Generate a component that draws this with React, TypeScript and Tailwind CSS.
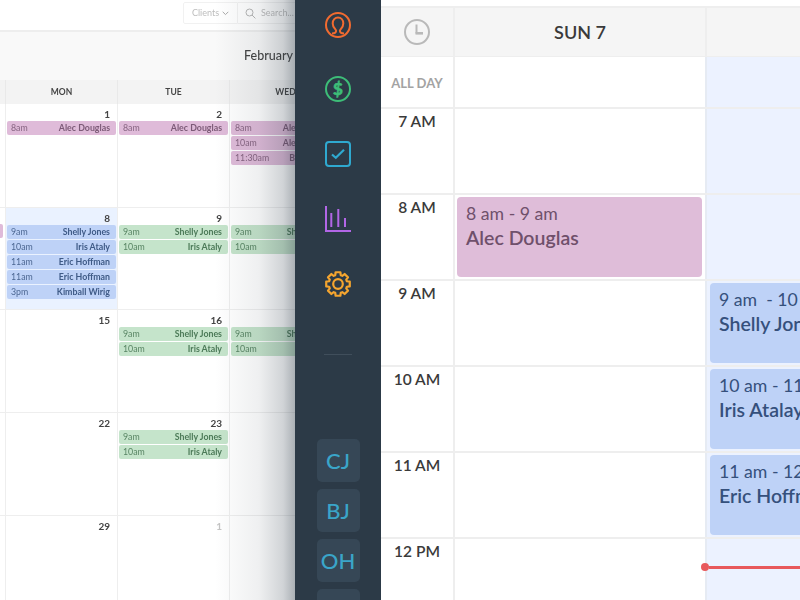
import React from "react";

type Ev = { t: string; n: string };
const pink = "bg-[#dfbbd9] text-[#7c5a77]";
const blue = "bg-[#bed2f7] text-[#3e5a86]";
const green = "bg-[#c5e4cb] text-[#4c7a58]";

function MonthEvent({ e, c }: { e: Ev; c: string }) {
  return (
    <div className={`h-[14px] rounded-[2px] flex items-center justify-between pl-1 pr-1.5 text-[8.8px] leading-none ${c}`}>
      <span className="opacity-90">{e.t}</span>
      <span className="font-bold whitespace-nowrap">{e.n}</span>
    </div>
  );
}

function DayCell({ d, evs = [], c = "", today = false, muted = false }: { d?: string; evs?: Ev[]; c?: string; today?: boolean; muted?: boolean }) {
  return (
    <div className={`w-[112px] shrink-0 border-l border-[#eeeeee] px-[1px] ${today ? "bg-[#eaf2ff]" : "bg-white"}`}>
      <div className={`h-[16px] pt-[5px] pr-[6px] text-right text-[10px] leading-[11px] font-bold ${muted ? "text-[#c4c4c4]" : "text-[#444444]"}`}>{d}</div>
      <div className="flex flex-col gap-[1px] mt-[1px]">
        {evs.map((e, i) => (
          <MonthEvent key={i} e={e} c={c} />
        ))}
      </div>
    </div>
  );
}

function MonthRow({ h, children, first }: { h: string; children: React.ReactNode; first?: boolean }) {
  return <div className={`flex pl-[5px] ${h} ${first ? "" : "border-t border-[#eeeeee]"}`}>{children}</div>;
}

const a: Ev = { t: "8am", n: "Alec Douglas" };
const s: Ev = { t: "9am", n: "Shelly Jones" };
const ir: Ev = { t: "10am", n: "Iris Ataly" };
const er: Ev = { t: "11am", n: "Eric Hoffman" };
const k: Ev = { t: "3pm", n: "Kimball Wirig" };

function MonthPanel() {
  return (
    <div className="w-[295px] h-full shrink-0 relative overflow-hidden bg-white">
      <div className="w-[460px] blur-[0.35px]">
        <div className="h-[30px] flex pl-[183px] items-start pt-[2px] text-[9px] text-[#bdbdbd]">
          <div className="h-[22px] w-[55px] border border-[#f1f1f1] rounded-l-[2px] flex items-center justify-center gap-[3px]">
            Clients
            <svg width="7" height="5" viewBox="0 0 7 5" fill="none" stroke="#a9a9a9" strokeWidth="1"><path d="M.7.8 3.5 3.6 6.3.8" /></svg>
          </div>
          <div className="h-[22px] w-[100px] border border-l-0 border-[#f1f1f1] flex items-center pl-[7px] gap-[5px]">
            <svg width="11" height="11" viewBox="0 0 11 11" fill="none" stroke="#b5b5b5" strokeWidth="1"><circle cx="4.5" cy="4.5" r="3.5" /><path d="m7 7 3.4 3.4" /></svg>
            Search...
          </div>
        </div>
        <div className="h-[50px] border-t-2 border-[#eeeeee] bg-[#f9f9f9] flex items-center pl-[244px] text-[12.5px] font-medium text-[#444444]">February 2015</div>
        <div className="h-[24px] flex pl-[5px] bg-[#f3f3f3] text-[8.5px] font-bold text-[#444444]">
          {["MON", "TUE", "WED"].map((d) => (
            <div key={d} className="w-[112px] border-l border-[#e9e9e9] flex items-center justify-center">{d}</div>
          ))}
        </div>
        <MonthRow h="h-[103px]" first>
          <DayCell d="1" evs={[a]} c={pink} />
          <DayCell d="2" evs={[a]} c={pink} />
          <DayCell d="3" evs={[a, { t: "10am", n: "Alec Douglas" }, { t: "11:30am", n: "Brian Jones" }]} c={pink} />
        </MonthRow>
        <MonthRow h="h-[102px]">
          <DayCell d="8" evs={[s, ir, er, er, k]} c={blue} today />
          <DayCell d="9" evs={[s, ir]} c={green} />
          <DayCell d="10" evs={[s, ir]} c={green} />
        </MonthRow>
        <MonthRow h="h-[103px]">
          <DayCell d="15" />
          <DayCell d="16" evs={[s, ir]} c={green} />
          <DayCell d="17" evs={[s, ir]} c={green} />
        </MonthRow>
        <MonthRow h="h-[103px]">
          <DayCell d="22" />
          <DayCell d="23" evs={[s, ir]} c={green} />
          <DayCell d="24" />
        </MonthRow>
        <MonthRow h="h-[90px]">
          <DayCell d="29" />
          <DayCell d="1" muted />
          <DayCell d="2" muted />
        </MonthRow>
      </div>
      <div className="absolute left-0 top-[224px] w-[3px] h-[14px] rounded-r-[2px] bg-[#dfbbd9]" />
      <div className="absolute right-0 top-0 bottom-0 w-[80px] bg-[linear-gradient(to_right,#2c3a4700_0%,#2c3a4714_55%,#2c3a4738_85%,#2c3a4766_100%)]" />
    </div>
  );
}

function gearPath() {
  const c = 13;
  const pts: string[] = [];
  for (let i = 0; i < 8; i++) {
    const base = (i * Math.PI) / 4 - Math.PI / 2;
    const seq: [number, number][] = [
      [-0.3, 9.3],
      [-0.2, 12],
      [0.2, 12],
      [0.3, 9.3],
    ];
    for (const [da, r] of seq) {
      pts.push(`${(c + r * Math.cos(base + da)).toFixed(2)} ${(c + r * Math.sin(base + da)).toFixed(2)}`);
    }
  }
  return `M${pts.join("L")}Z`;
}

function Sidebar() {
  return (
    <div className="w-[86px] h-full shrink-0 bg-[#2c3a47] flex flex-col items-center overflow-hidden">
      <svg className="mt-[12px] shrink-0" width="26" height="26" viewBox="0 0 26 26" fill="none" stroke="#f26b30" strokeWidth="2">
        <circle cx="13" cy="13" r="12" />
        <path d="M7 21.500c3.200-.2 4.100-1.300 4.100-2.800 0-1.500-3.400-3-3.400-7.300C7.700 8 10 5.500 13 5.500s5.300 2.500 5.300 5.900c0 4.300-3.400 5.800-3.400 7.300 0 1.500.9 2.600 4.100 2.800" />
      </svg>
      <svg className="mt-[38px] shrink-0" width="26" height="26" viewBox="0 0 26 26" fill="none">
        <circle cx="13" cy="13" r="12" stroke="#3dbd78" strokeWidth="2" />
        <text x="13" y="19" textAnchor="middle" fontSize="17" fontWeight="900" fontFamily="Lato, sans-serif" fill="#3dbd78" stroke="#3dbd78" strokeWidth="0.5">$</text>
      </svg>
      <svg className="mt-[39px] shrink-0" width="26" height="26" viewBox="0 0 26 26" fill="none">
        <rect x="1" y="1" width="24" height="24" rx="3" stroke="#2fa9d0" strokeWidth="2" />
        <path d="M7 13.500 10.800 16.800 19 8.800" stroke="#2fa9d0" strokeWidth="2.200" />
      </svg>
      <svg className="mt-[39px] shrink-0" width="26" height="26" viewBox="0 0 26 26" fill="none" stroke="#b266e6" strokeWidth="2">
        <path d="M1 0V25H26" />
        <path d="M6.300 7V21M13.300 3V21M20 12V21" />
      </svg>
      <svg className="mt-[39px] shrink-0" width="26" height="26" viewBox="0 0 26 26" fill="none" stroke="#f5a52f" strokeWidth="2.200" strokeLinejoin="round">
        <circle cx="13" cy="13" r="4.800" />
        <path d={gearPath()} />
      </svg>
      <div className="mt-[57px] w-[28px] h-[1px] bg-[#404e5b] shrink-0" />
      <div className="mt-[84px] flex flex-col gap-[7px] shrink-0">
        {["CJ", "BJ", "OH", ""].map((x, i) => (
          <div key={i} className="w-[43px] h-[43px] rounded-[5px] bg-[#364756] flex items-center justify-center text-[22px] font-medium text-[#3aa5c9]">{x}</div>
        ))}
      </div>
    </div>
  );
}

function Hour({ label, sun, col }: { label: string; sun?: React.ReactNode; col?: React.ReactNode }) {
  return (
    <div className="h-[86px] flex border-b-2 border-[#eeeeee] shrink-0">
      <div className="w-[72px] shrink-0 text-center text-[15.5px] leading-[20px] pt-[2px] font-semibold text-[#3a3a3a]">{label}</div>
      <div className="w-[252px] shrink-0 border-l-2 border-[#eeeeee] pl-[2px] pt-[2px]">{sun}</div>
      <div className="flex-1 border-l-2 border-[#e6ebf3] bg-[#ecf2ff] pl-[3px] pt-[2px] relative">{col}</div>
    </div>
  );
}

function DayEvent({ t, n, c, w }: { t: string; n: string; c: string; w: string }) {
  return (
    <div className={`h-[80px] rounded-[4px] pl-[9px] pt-[6px] whitespace-pre overflow-hidden ${c} ${w}`}>
      <div className="text-[17.7px] leading-[22px]">{t}</div>
      <div className="text-[19.5px] leading-[25px] font-semibold">{n}</div>
    </div>
  );
}

function DayPanel() {
  return (
    <div className="flex-1 h-full bg-white overflow-hidden flex flex-col">
      <div className="h-[8px] shrink-0 border-b-2 border-[#eeeeee]" />
      <div className="h-[49px] shrink-0 flex bg-[#f5f5f5] border-b border-[#eeeeee]">
        <div className="w-[72px] shrink-0 flex items-center justify-center">
          <svg width="26" height="26" viewBox="0 0 26 26" fill="none" stroke="#b9b9b9" strokeWidth="2">
            <circle cx="13" cy="13" r="12" />
            <path d="M12.500 5.500V14.500" />
            <path d="M11.500 14.300H19" strokeWidth="2.600" />
          </svg>
        </div>
        <div className="w-[252px] shrink-0 border-l-2 border-[#eeeeee] flex items-center justify-center text-[18px] font-semibold text-[#3a3a3a]">SUN 7</div>
        <div className="flex-1 border-l-2 border-[#eeeeee]" />
      </div>
      <div className="h-[52px] shrink-0 flex border-b-2 border-[#eeeeee]">
        <div className="w-[72px] shrink-0 flex items-center justify-center pt-[4px] text-[13px] font-bold text-[#a3a3a3]">ALL DAY</div>
        <div className="w-[252px] shrink-0 border-l-2 border-[#eeeeee]" />
        <div className="flex-1 border-l-2 border-[#e6ebf3] bg-[#ecf2ff]" />
      </div>
      <Hour label="7 AM" />
      <Hour label="8 AM" sun={<DayEvent t="8 am - 9 am" n="Alec Douglas" c="bg-[#dfbdd9] text-[#6f506b]" w="w-[245px]" />} />
      <Hour label="9 AM" col={<DayEvent t="9 am  - 10 am" n="Shelly Jones" c="bg-[#bed2f7] text-[#35507c]" w="w-[200px]" />} />
      <Hour label="10 AM" col={<DayEvent t="10 am - 11 am" n="Iris Atalay" c="bg-[#bed2f7] text-[#35507c]" w="w-[200px]" />} />
      <Hour label="11 AM" col={<DayEvent t="11 am - 12 pm" n="Eric Hoffman" c="bg-[#bed2f7] text-[#35507c]" w="w-[200px]" />} />
      <Hour
        label="12 PM"
        col={
          <div className="absolute left-[-6px] right-0 top-[24px] flex items-center">
            <div className="w-[8px] h-[8px] rounded-full bg-[#e8595c] shrink-0" />
            <div className="flex-1 h-[3px] bg-[#e8595c]" />
          </div>
        }
      />
    </div>
  );
}

export default function App() {
  return (
    <div className="w-[800px] h-[600px] flex overflow-hidden bg-white" style={{ fontFamily: "Lato, 'Open Sans', sans-serif" }}>
      <MonthPanel />
      <Sidebar />
      <DayPanel />
    </div>
  );
}
